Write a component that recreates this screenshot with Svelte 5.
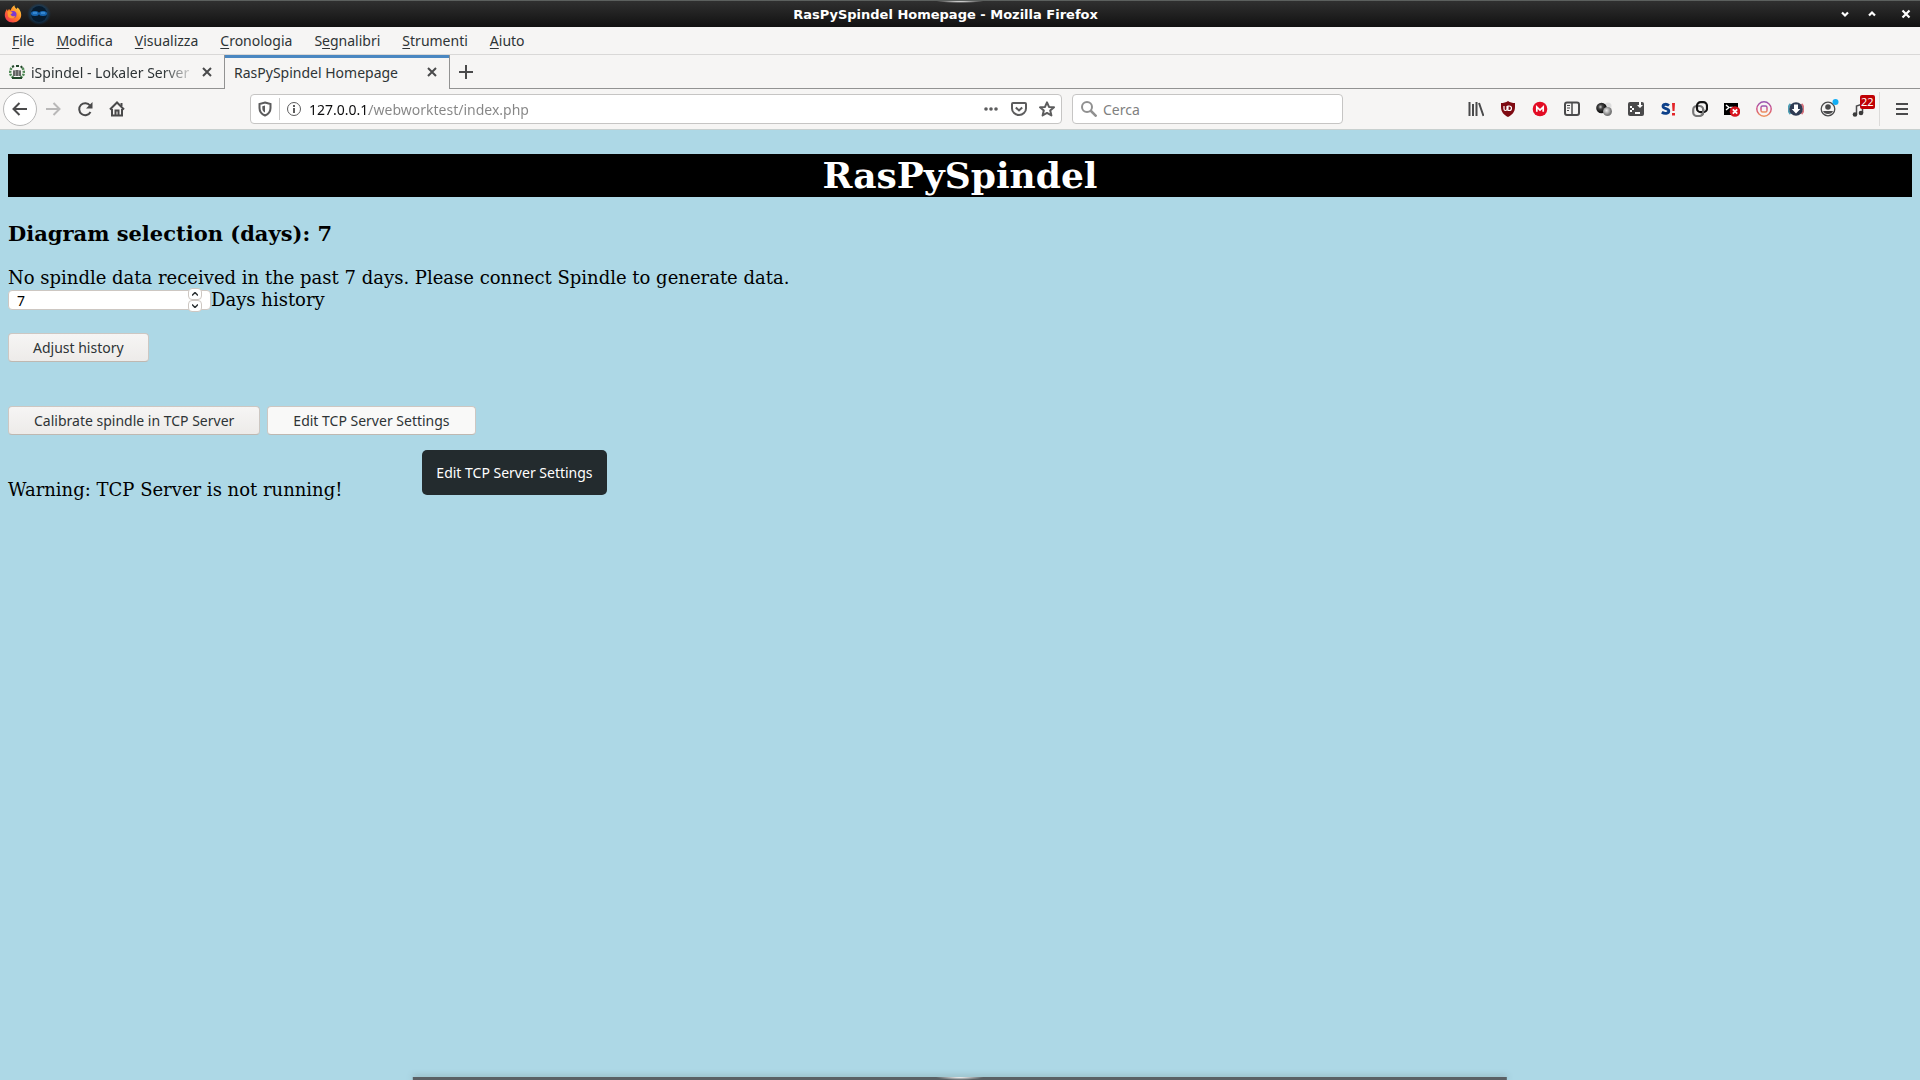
<script lang="ts">
	const menus = [
		['', 'F', 'ile'],
		['', 'M', 'odifica'],
		['', 'V', 'isualizza'],
		['', 'C', 'ronologia'],
		['S', 'e', 'gnalibri'],
		['', 'S', 'trumenti'],
		['', 'A', 'iuto']
	];

	let days = 7;
	let shown = 7;
	let url = '127.0.0.1/webworktest/index.php';
	let search = '';
</script>

<div class="window">
	<header class="titlebar">
		<div class="app-icons">
			<svg width="18" height="18" viewBox="0 0 18 18">
				<defs>
					<linearGradient id="fox" x1="1" y1="0" x2="0" y2="1">
						<stop offset="0" stop-color="#ffe847" />
						<stop offset="0.5" stop-color="#ff7a25" />
						<stop offset="1" stop-color="#f0255e" />
					</linearGradient>
				</defs>
				<path d="M9 17.500C4 17.500.8 14 .8 10c0-2.500 1-4.500 2.200-6l.5 2 1.500-2 1.500 1.500C7.200 3.500 8.500 1.500 10.500.3c0 2 1 2.700 2 3.700l1-1.500c2.500 2 3.700 4.500 3.700 7.500 0 4.300-3.700 7.500-8.200 7.500z" fill="url(#fox)" />
				<circle cx="9" cy="9.500" r="3.500" fill="#7a3ad1" />
				<path d="M3.500 6.500c2-.8 4 0 5.300 1.200L6.500 9.500c1 2 3 2.200 5 1.200-1 3-5.500 3.600-7.500.5z" fill="#ff9a2e" />
			</svg>
			<svg width="24" height="22" viewBox="0 0 24 22">
				<defs>
					<radialGradient id="halo">
						<stop offset="0.3" stop-color="#0a5fa8" />
						<stop offset="1" stop-color="#07518f" stop-opacity="0" />
					</radialGradient>
				</defs>
				<ellipse cx="12" cy="11" rx="12" ry="11" fill="url(#halo)" />
				<circle cx="12" cy="11" r="8" fill="#071b2d" />
				<ellipse cx="8" cy="10.500" rx="4" ry="2.500" fill="#1767b3" />
				<ellipse cx="16" cy="10.500" rx="4" ry="2.500" fill="#1767b3" />
				<path d="M6 10h4M14 10h4" stroke="#55a9ed" />
			</svg>
		</div>
		<span class="window-title">RasPySpindel Homepage - Mozilla Firefox</span>
		<div class="window-buttons">
			<button aria-label="Minimize">
				<svg width="10" height="10" viewBox="0 0 10 10"><path d="M2 3.500l3 3 3-3" /></svg>
			</button>
			<button aria-label="Maximize">
				<svg width="10" height="10" viewBox="0 0 10 10"><path d="M2 6.500l3-3 3 3" /></svg>
			</button>
			<button class="shut" aria-label="Close">
				<svg width="10" height="10" viewBox="0 0 10 10"><path d="M1.500 1.500l7 7M8.500 1.500l-7 7" /></svg>
			</button>
		</div>
	</header>

	<nav class="menubar">
		{#each menus as [before, key, after]}
			<button>{before}<u>{key}</u>{after}</button>
		{/each}
	</nav>

	<div class="tabs">
		<div class="tab">
			<svg class="favicon" width="16" height="16" viewBox="0 0 16 16">
				<path d="M2.500 4C0 8 1 12 5 14M13.500 4c2.500 4 1.500 8-2.500 10" stroke="#4f8a55" stroke-width="2.500" fill="none" stroke-dasharray="2 1" />
				<path d="M4 6h8v6H4z" fill="#999" />
				<path d="M5 7v5M8 6v6M11 7v5" stroke="#333" />
				<path d="M3 3l2-1M7 2h3M12 2l1 2M3 14h10" stroke="#23482b" stroke-width="2" />
			</svg>
			<span class="tab-title fade">iSpindel - Lokaler Server</span>
			<button aria-label="Close tab">
				<svg width="10" height="10" viewBox="0 0 10 10"><path d="M1 1l8 8M9 1l-8 8" /></svg>
			</button>
		</div>
		<div class="tab active">
			<span class="tab-title">RasPySpindel Homepage</span>
			<button aria-label="Close tab">
				<svg width="10" height="10" viewBox="0 0 10 10"><path d="M1 1l8 8M9 1l-8 8" /></svg>
			</button>
		</div>
		<button class="new-tab" aria-label="New tab">
			<svg width="14" height="14" viewBox="0 0 14 14"><path d="M7 0v14M0 7h14" /></svg>
		</button>
	</div>

	<div class="toolbar">
		<div class="nav">
			<button class="back" aria-label="Back">
				<svg width="16" height="16" viewBox="0 0 16 16"><path d="M15 8H2M7.500 2L1.500 8l6 6" /></svg>
			</button>
			<button class="forward" aria-label="Forward">
				<svg width="16" height="16" viewBox="0 0 16 16"><path d="M1 8h13M8.500 2l6 6-6 6" /></svg>
			</button>
			<button aria-label="Reload">
				<svg width="16" height="16" viewBox="0 0 16 16">
					<path d="M13 4.500A6 6 0 1 0 13.500 11" />
					<path d="M15.500 1v6.500H9z" fill="#4a4a4b" stroke="none" />
				</svg>
			</button>
			<button aria-label="Home">
				<svg width="16" height="16" viewBox="0 0 16 16">
					<path d="M1 8.500l7-7 7 7M3 8v6.500h10V8" />
					<path d="M6.500 14V9.500h3V14M12.500 5V2" />
				</svg>
			</button>
		</div>

		<div class="urlbar">
			<svg width="16" height="16" viewBox="0 0 16 16">
				<path d="M8 1.500l5.500 1.500v4c0 3.500-2 6-5.500 7.500C4.500 13 2.500 10.500 2.500 7V3z" />
				<path d="M8 4.500v7C6 10.500 5.300 9 5.300 7V5.200z" fill="#5c5c5d" stroke="none" />
			</svg>
			<span class="divider"></span>
			<svg class="thin" width="16" height="16" viewBox="0 0 16 16">
				<circle cx="8" cy="8" r="6.500" />
				<path d="M8 7v5M8 4v2" stroke-width="2" />
			</svg>
			<input class="address" type="text" aria-label="Address" bind:value={url} />
			<button aria-label="Page actions">
				<svg width="16" height="16" viewBox="0 0 16 16">
					<g fill="#5c5c5d" stroke="none"><circle cx="3" cy="8" r="1.800" /><circle cx="8" cy="8" r="1.800" /><circle cx="13" cy="8" r="1.800" /></g>
				</svg>
			</button>
			<button aria-label="Save to Pocket">
				<svg width="16" height="16" viewBox="0 0 16 16">
					<path d="M2 2h12a1 1 0 0 1 1 1v4.500a7 6.500 0 0 1-14 0V3a1 1 0 0 1 1-1z" />
					<path d="M4.800 6.500L8 9.500l3.200-3" />
				</svg>
			</button>
			<button aria-label="Bookmark this page">
				<svg width="16" height="16" viewBox="0 0 16 16">
					<path d="M8 1.300l2 4.600 5 .4-3.800 3.300 1.200 4.900L8 11.900l-4.400 2.600 1.200-4.900L1 6.300l5-.4z" stroke-linejoin="round" />
				</svg>
			</button>
		</div>

		<div class="searchbar">
			<svg width="16" height="16" viewBox="0 0 16 16">
				<circle cx="6" cy="6" r="5" />
				<path d="M9.500 9.500l6 6" stroke-width="2.500" />
			</svg>
			<input type="text" aria-label="Search" placeholder="Cerca" bind:value={search} />
		</div>

		<div class="extensions">
			<button aria-label="Library">
				<svg width="16" height="16" viewBox="0 0 16 16"><path d="M1.500 1v14M5 3v12M8.500 1v14M11 2l4.500 13" stroke-width="2" /></svg>
			</button>
			<button aria-label="uBlock Origin">
				<svg width="16" height="16" viewBox="0 0 16 16">
					<path d="M8 0c2 1.500 4.500 2 7 2v4c0 5-3 8-7 10-4-2-7-5-7-10V2c2.500 0 5-.5 7-2z" fill="#7e0a12" stroke="none" />
					<path d="M4 5v3q0 1.500 1.500 1.500T7 8V5M8 9.500V5h1.200a2.200 2.200 0 0 1 0 4.500z" stroke="#fff" stroke-width="1.200" />
				</svg>
			</button>
			<button aria-label="MEGA">
				<svg width="16" height="16" viewBox="0 0 16 16">
					<circle cx="8" cy="8" r="7.300" fill="#e30c24" stroke="none" />
					<path d="M4.800 10.800V6L8 9l3.200-3v4.800" stroke="#fff" stroke-width="1.700" />
				</svg>
			</button>
			<button aria-label="Sidebars">
				<svg width="16" height="16" viewBox="0 0 16 16">
					<rect x="1" y="1.500" width="14" height="12.500" rx="2" />
					<path d="M8 2v12" stroke-width="1.500" />
					<path d="M3 4.500h3M3 7h3M3 9.500h2" stroke-width="1" />
				</svg>
			</button>
			<button aria-label="Spheres">
				<svg width="16" height="16" viewBox="0 0 16 16">
					<defs>
						<radialGradient id="dark" cx="0.4" cy="0.4"><stop offset="0" stop-color="#ccc" /><stop offset="0.4" stop-color="#444" /><stop offset="1" stop-color="#111" /></radialGradient>
						<radialGradient id="light" cx="0.4" cy="0.4"><stop offset="0" stop-color="#eee" /><stop offset="1" stop-color="#777" /></radialGradient>
					</defs>
					<g stroke="none">
						<circle cx="12" cy="5" r="3.500" fill="#ddd" />
						<circle cx="5.500" cy="7" r="5.300" fill="url(#dark)" />
						<circle cx="11.500" cy="10.500" r="4.500" fill="url(#light)" />
					</g>
				</svg>
			</button>
			<button aria-label="Terminal">
				<svg width="16" height="16" viewBox="0 0 16 16">
					<rect x="0" y="1" width="16" height="14" rx="2" fill="#4a4a4b" stroke="none" />
					<path d="M2 5h2v2H2zM4 7h2v2H4zM2 9h2v2H2zM7 11h5v2H7zM11 1v3h-2l3 3 3-3h-2V1z" fill="#fff" stroke="none" />
				</svg>
			</button>
			<button aria-label="Stylish">
				<svg width="16" height="16" viewBox="0 0 16 16">
					<path d="M9 4.500C6.500 2.500 3 3 3 5.200c0 3 5.800 1.800 5.800 4.800 0 2.600-4.300 3-7 1.300" stroke="#0d4089" stroke-width="2.800" />
					<path d="M12 2h3l-.5 8h-2zM12 12h3v2.500h-3z" fill="#e32428" stroke="none" />
				</svg>
			</button>
			<button aria-label="Link rings">
				<svg width="16" height="16" viewBox="0 0 16 16">
					<rect x="1.200" y="5" width="10" height="10" rx="3.800" stroke="#777" stroke-width="2.200" />
					<rect x="5" y="1.200" width="10" height="10" rx="3.800" stroke="#111" stroke-width="2.200" />
					<path d="M11.200 8v3a3.800 3.800 0 0 1-2 3.400" stroke="#777" stroke-width="2.200" />
				</svg>
			</button>
			<button aria-label="Console">
				<svg width="16" height="16" viewBox="0 0 16 16">
					<path d="M0 2h14v12H0z" fill="#000" stroke="none" />
					<path d="M2 4l3 2.500L2 9M6 6.500h3" stroke="#fff" stroke-width="1.500" />
					<circle cx="11" cy="10.500" r="5.300" fill="#d7141d" stroke="none" />
					<path d="M8.800 8.300l4.400 4.400M13.200 8.300l-4.400 4.400" stroke="#fff" stroke-width="1.800" />
				</svg>
			</button>
			<button aria-label="Instagram">
				<svg width="16" height="16" viewBox="0 0 16 16">
					<defs>
						<linearGradient id="insta" x1="0" y1="0" x2="0" y2="1"><stop offset="0" stop-color="#9857b4" /><stop offset="0.5" stop-color="#d24a80" /><stop offset="1" stop-color="#ee945c" /></linearGradient>
					</defs>
					<circle cx="8" cy="8" r="7.200" stroke="url(#insta)" stroke-width="1.400" />
					<rect x="5" y="5" width="6" height="6" rx="1.500" stroke="url(#insta)" stroke-width="1.400" />
				</svg>
			</button>
			<button aria-label="Downloader">
				<svg width="16" height="16" viewBox="0 0 16 16">
					<path d="M2.500 3a7 7 0 0 0 0 10" stroke="#4e9fb5" />
					<path d="M13.500 3a7 7 0 0 1 0 10" stroke="#d8737d" />
					<circle cx="8" cy="8" r="6.800" fill="#2f3b53" stroke="none" />
					<path d="M6 3.500h4V8h2.300L8 12.500 3.700 8H6z" fill="#fff" stroke="none" />
				</svg>
			</button>
			<button aria-label="Account">
				<svg width="16" height="16" viewBox="0 0 16 16" overflow="visible">
					<circle cx="8" cy="8" r="6.800" stroke-width="1.300" />
					<circle cx="8" cy="6" r="2.800" fill="#4a4a4b" stroke="none" />
					<path d="M3 10h10c-1 4-9 4-10 0z" fill="#4a4a4b" stroke="none" />
					<circle cx="15.500" cy="1" r="3" fill="#12aef5" stroke="none" />
				</svg>
			</button>
			<button class="music" aria-label="Music">
				<svg width="16" height="16" viewBox="0 0 16 16">
					<path d="M4.500 13V5l6-2v9" stroke-width="1.500" />
					<circle cx="3" cy="13.500" r="2.300" fill="#3b3b3b" stroke="none" />
					<circle cx="9" cy="12" r="2.300" fill="#3b3b3b" stroke="none" />
				</svg>
				<span class="badge">22</span>
			</button>
			<button class="menu" aria-label="Open menu">
				<svg width="12" height="16" viewBox="0 0 12 16"><path d="M0 3h12M0 8h12M0 13h12" /></svg>
			</button>
		</div>
	</div>

	<main>
		<h1>RasPySpindel</h1>
		<h3>Diagram selection (days): {shown}</h3>
		<p>No spindle data received in the past {shown} days. Please connect Spindle to generate data.</p>

		<div class="history">
			<div class="number">
				<input id="days" type="number" bind:value={days} />
				<div class="spinner">
					<button aria-label="More days" on:click={() => (days += 1)}>
						<svg width="6" height="4" viewBox="0 0 6 4"><path d="M0 3.500l3-3 3 3" /></svg>
					</button>
					<button aria-label="Fewer days" on:click={() => (days = Math.max(1, days - 1))}>
						<svg width="6" height="4" viewBox="0 0 6 4"><path d="M0 .5l3 3 3-3" /></svg>
					</button>
				</div>
			</div>
			<label for="days">Days history</label>
		</div>
		<button class="push" on:click={() => (shown = days)}>Adjust history</button>

		<div class="actions">
			<button class="push">Calibrate spindle in TCP Server</button>
			<div class="hint">
				<button class="push hover">Edit TCP Server Settings</button>
				<span class="tooltip" role="tooltip">Edit TCP Server Settings</span>
			</div>
		</div>

		<p>Warning: TCP Server is not running!</p>
	</main>

	<div class="panel-edge"></div>
</div>

<style>
	:global(body) {
		background: #add8e6;
	}

	.window {
		font-family: 'Noto Sans', sans-serif;
		font-size: 14px;
		color: #2e3436;
	}

	button,
	input {
		font: inherit;
		color: inherit;
		border: none;
		background: none;
		padding: 0;
		margin: 0;
		outline: none;
	}

	svg {
		display: block;
		flex: none;
	}

	/* title bar */
	.titlebar {
		display: flex;
		align-items: center;
		height: 27px;
		box-sizing: border-box;
		border-top: 1px solid #5c605e;
		background: radial-gradient(ellipse 24px 2px at 50% 0, #fff, transparent), linear-gradient(#303030, #111);
		color: #fff;
	}

	.app-icons {
		display: flex;
		align-items: center;
		gap: 5px;
		padding-left: 4px;
	}

	.window-title {
		flex: 1;
		text-align: center;
		font: bold 13px 'DejaVu Sans', sans-serif;
	}

	.window-buttons {
		display: flex;
		gap: 17px;
		padding-right: 9px;
	}

	.window-buttons .shut {
		padding-left: 7px;
	}

	.window-buttons path {
		stroke: #fff;
		stroke-width: 2.2;
		fill: none;
	}

	/* menu bar */
	.menubar {
		display: flex;
		height: 28px;
		box-sizing: border-box;
		padding-left: 1px;
		border-bottom: 1px solid #d9d8d7;
		background: #f6f5f4;
	}

	.menubar button {
		padding: 0 11px;
	}

	.menubar u {
		text-underline-offset: 2px;
	}

	/* tabs */
	.tabs {
		display: flex;
		height: 34px;
		background: linear-gradient(#929292, #929292) bottom / 100% 1px no-repeat #f6f5f4;
	}

	.tab {
		display: flex;
		align-items: center;
		gap: 6px;
		width: 224px;
		box-sizing: border-box;
		padding: 0 12px 0 9px;
	}

	.tab.active {
		width: 226px;
		border: solid #929292;
		border-width: 0 1px;
		background: linear-gradient(#4a87c1, #4a87c1) top / 100% 3px no-repeat #f6f5f4;
	}

	.tab-title {
		flex: 1;
		overflow: hidden;
		white-space: nowrap;
	}

	.fade {
		mask-image: linear-gradient(to right, #000 80%, transparent);
	}

	.tab button path,
	.new-tab path {
		stroke: #4a4a4b;
		stroke-width: 2;
	}

	.new-tab {
		padding: 0 9px;
	}

	/* navigation toolbar */
	.toolbar {
		display: flex;
		align-items: center;
		height: 41px;
		box-sizing: border-box;
		border-bottom: 1px solid #c8d0cf;
		background: #f6f5f4;
	}

	.toolbar svg {
		fill: none;
		stroke: #4a4a4b;
		stroke-width: 2;
	}

	.nav {
		display: flex;
		align-items: center;
		gap: 16px;
		width: 247px;
		padding-left: 3px;
	}

	.nav .back {
		display: grid;
		place-items: center;
		width: 34px;
		height: 34px;
		margin-right: -8px;
		box-sizing: border-box;
		border: 1px solid #b8b8b8;
		border-radius: 50%;
		background: #fff;
	}

	.nav .forward svg {
		stroke: #b9b8b8;
	}

	.urlbar,
	.searchbar {
		display: flex;
		align-items: center;
		height: 30px;
		box-sizing: border-box;
		border: 1px solid #c6c5c4;
		border-radius: 4px;
		background: #fff;
	}

	.urlbar {
		flex: 1;
		gap: 6px;
		padding: 0 6px;
	}

	.urlbar svg {
		stroke: #5c5c5d;
	}

	.urlbar .thin {
		stroke-width: 1;
	}

	.divider {
		width: 1px;
		height: 22px;
		background: #c9c9c9;
	}

	.urlbar button {
		margin-left: 6px;
	}

	.address {
		flex: 1;
		min-width: 0;
		margin-left: 1px;
		/* host in black, path in grey */
		background: linear-gradient(to right, #0c0c0d 60px, #858585 60px);
		background-clip: text;
		color: transparent;
	}

	.searchbar {
		width: 271px;
		gap: 6px;
		margin-left: 10px;
		padding: 0 8px;
	}

	.searchbar svg {
		stroke: #909090;
	}

	.searchbar input {
		flex: 1;
		min-width: 0;
	}

	.searchbar input::placeholder {
		color: #808080;
		opacity: 1;
	}

	.extensions {
		display: flex;
		align-items: center;
		gap: 16px;
		margin-left: 125px;
	}

	.music {
		position: relative;
	}

	.badge {
		position: absolute;
		top: -6px;
		left: 8px;
		padding: 0 1px;
		border-radius: 2px;
		background: #c00005;
		color: #fff;
		font-size: 11px;
		line-height: 14px;
	}

	.menu {
		height: 34px;
		margin-left: -5px;
		padding: 0 12px 0 16px;
		border-left: 1px solid #dcdbda;
	}

	/* page */
	main {
		padding: 24px 8px;
		font: 18px/22px 'DejaVu Serif', serif;
		color: #000;
	}

	h1 {
		margin: 0 0 24px;
		background: #000;
		color: #fff;
		text-align: center;
		font-size: 36px;
		line-height: 43px;
	}

	h3 {
		margin: 0 0 21px;
		font-size: 21px;
		line-height: 25px;
	}

	p {
		margin: 0;
	}

	.history {
		display: flex;
		align-items: center;
		height: 22px;
		margin-bottom: 22px;
	}

	.number {
		position: relative;
		width: 203px;
		font: 14px 'Noto Sans', sans-serif;
	}

	.number input {
		display: block;
		width: 100%;
		height: 20px;
		box-sizing: border-box;
		padding: 0 8px;
		border: 1px solid #cdc7c2;
		border-radius: 4px;
		background: #fff;
		appearance: textfield;
	}

	.number input::-webkit-inner-spin-button {
		appearance: none;
	}

	.spinner {
		position: absolute;
		top: -2px;
		right: 9px;
		display: flex;
		flex-direction: column;
	}

	.spinner button {
		display: grid;
		place-items: center;
		width: 14px;
		height: 12px;
		box-sizing: border-box;
		border: 1px solid #cdc7c2;
		border-radius: 4px;
		background: #fff;
	}

	.spinner path {
		fill: none;
		stroke: #2e3436;
		stroke-width: 1.500;
	}

	.push {
		display: block;
		height: 29px;
		padding: 0 24px;
		border: 1px solid #cdc7c2;
		border-bottom-color: #bfb8b1;
		border-radius: 4px;
		background: linear-gradient(#f6f5f4, #edebe9);
		font: 14px 'Noto Sans', sans-serif;
		color: #2e3436;
	}

	.push.hover,
	.push:hover {
		background: #f9f9f8;
	}

	.actions {
		display: flex;
		gap: 7px;
		margin: 44px 0;
	}

	.actions .push {
		padding: 0 25px;
	}

	.hint {
		position: relative;
	}

	.tooltip {
		position: absolute;
		top: 44px;
		left: 155px;
		padding: 0 14px;
		border-radius: 5px;
		background: #232b2e;
		color: #fff;
		font: 14px/45px 'Noto Sans', sans-serif;
		white-space: nowrap;
	}

	.panel-edge {
		position: fixed;
		bottom: 0;
		left: 50%;
		width: 57%;
		height: 3px;
		transform: translateX(-50%);
		background: radial-gradient(ellipse 24px 3px at 50% 0, #fff, transparent), #5a6064;
		box-shadow: 0 -1px 6px #8ba8ad;
	}
</style>
